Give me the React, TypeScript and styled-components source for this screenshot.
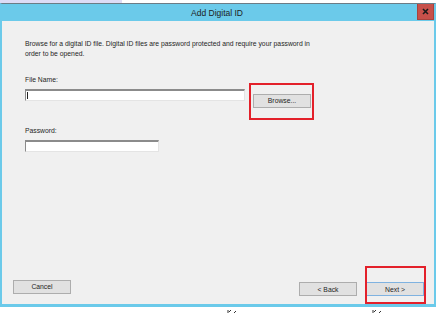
import React from "react";
import styled, { createGlobalStyle } from "styled-components";

const GlobalStyle = createGlobalStyle`
  html, body {
    margin: 0;
    padding: 0;
    background: #ffffff;
  }
  * {
    box-sizing: border-box;
  }
`;

const Page = styled.div`
  width: 436px;
  height: 313px;
  overflow: hidden;
  background: #ffffff;
  font-family: "Liberation Sans", Arial, sans-serif;
  color: #1f1f1f;
`;

const TopStrip = styled.div`
  display: flex;
  height: 3px;
`;

const StripTab = styled.div`
  width: 122px;
  background: #dedcf6;
`;

const Window = styled.div`
  display: flex;
  flex-direction: column;
  border-top: 1px solid #6c7c86;
  border-left: 2px solid #6bcaea;
  border-right: 2px solid #6bcaea;
  border-bottom: 3px solid #6bcaea;
`;

const TitleBar = styled.div`
  display: grid;
  grid-template-columns: 1fr auto 1fr;
  align-items: center;
  height: 17px;
  margin: 0 -2px;
  padding-right: 2px;
  background: #6bcaea;
`;

const Title = styled.div`
  grid-column: 2;
  font-size: 8.5px;
  color: #1d1d1d;
`;

const CloseButton = styled.div`
  grid-column: 3;
  justify-self: end;
  align-self: start;
  display: flex;
  align-items: center;
  justify-content: center;
  width: 17px;
  height: 16px;
  background: #c7504a;
  border: 1px solid #a8433d;
  border-top: none;
`;

const Client = styled.div`
  display: flex;
  flex-direction: column;
  justify-content: space-between;
  height: 283px;
  background: #f0f0f0;
  padding: 18px 10px 8px 11px;
`;

const Content = styled.div`
  display: flex;
  flex-direction: column;
  padding-left: 12px;
`;

const Intro = styled.p`
  margin: 0;
  width: 300px;
  font-size: 6.8px;
  line-height: 9.5px;
`;

const Label = styled.div<{ $top: number }>`
  font-size: 6.8px;
  line-height: 9px;
  margin-top: ${(p) => p.$top}px;
`;

const FieldRow = styled.div`
  display: flex;
  align-items: flex-start;
  gap: 8px;
  margin-top: 5px;
`;

const TextBox = styled.div<{ $width: number; $caret?: boolean }>`
  position: relative;
  width: ${(p) => p.$width}px;
  height: 12px;
  background: #ffffff;
  border-top: 2px solid #8b8b8b;
  border-left: 1px solid #8b8b8b;
  border-right: 1px solid #e4e4e4;
  border-bottom: 1px solid #e4e4e4;

  &::after {
    content: "";
    display: ${(p) => (p.$caret ? "block" : "none")};
    position: absolute;
    left: 1px;
    top: 1px;
    width: 1px;
    height: 7px;
    background: #222;
  }
`;

const Button = styled.button<{ $default?: boolean }>`
  width: 58px;
  height: 14px;
  padding: 0;
  font-family: "Liberation Sans", Arial, sans-serif;
  font-size: 6.8px;
  color: #1f1f1f;
  background: #e1e1e1;
  border: 1px solid ${(p) => (p.$default ? "#7fb2e0" : "#adadad")};
`;

const Annotated = styled.div<{ $l: number; $t: number; $r: number; $b: number }>`
  position: relative;

  &::after {
    content: "";
    position: absolute;
    left: ${(p) => p.$l}px;
    top: ${(p) => p.$t}px;
    right: ${(p) => p.$r}px;
    bottom: ${(p) => p.$b}px;
    border: 2px solid #e3202a;
    pointer-events: none;
  }
`;

const Footer = styled.div`
  display: flex;
  align-items: center;
`;

const Spacer = styled.div`
  flex: 1;
`;

const BackWrap = styled.div`
  margin-right: 9px;
`;

const Below = styled.div`
  position: relative;
  height: 7px;
`;

const Mark = styled.svg<{ $left: number }>`
  position: absolute;
  left: ${(p) => p.$left}px;
  bottom: 0;
`;

const CursorMark = ({ left }: { left: number }) => (
  <Mark $left={left} width="10" height="4" viewBox="0 0 10 4">
    <path d="M1 0 L1 4 M2 2 L4 0 M6 4 L9 1" stroke="#333" strokeWidth="1" fill="none" />
  </Mark>
);

export default function App() {
  return (
    <Page>
      <GlobalStyle />
      <TopStrip>
        <StripTab />
      </TopStrip>
      <Window>
        <TitleBar>
          <Title>Add Digital ID</Title>
          <CloseButton>
            <svg width="7" height="7" viewBox="0 0 7 7">
              <path d="M1 1 L6 6 M6 1 L1 6" stroke="#1a1a1a" strokeWidth="1.6" />
            </svg>
          </CloseButton>
        </TitleBar>
        <Client>
          <Content>
            <Intro>
              Browse for a digital ID file. Digital ID files are password protected and require your password in
              order to be opened.
            </Intro>
            <Label $top={17}>File Name:</Label>
            <FieldRow>
              <TextBox $width={220} $caret />
              <Annotated $l={-4} $t={-6} $r={-3} $b={-12}>
                <Button>Browse...</Button>
              </Annotated>
            </FieldRow>
            <Label $top={18}>Password:</Label>
            <FieldRow>
              <TextBox $width={134} />
            </FieldRow>
          </Content>
          <Footer>
            <Button>Cancel</Button>
            <Spacer />
            <BackWrap>
              <Button>&lt; Back</Button>
            </BackWrap>
            <Annotated $l={-1} $t={-12} $r={-2} $b={-8}>
              <Button $default>Next &gt;</Button>
            </Annotated>
          </Footer>
        </Client>
      </Window>
      <Below>
        <CursorMark left={227} />
        <CursorMark left={372} />
      </Below>
    </Page>
  );
}
